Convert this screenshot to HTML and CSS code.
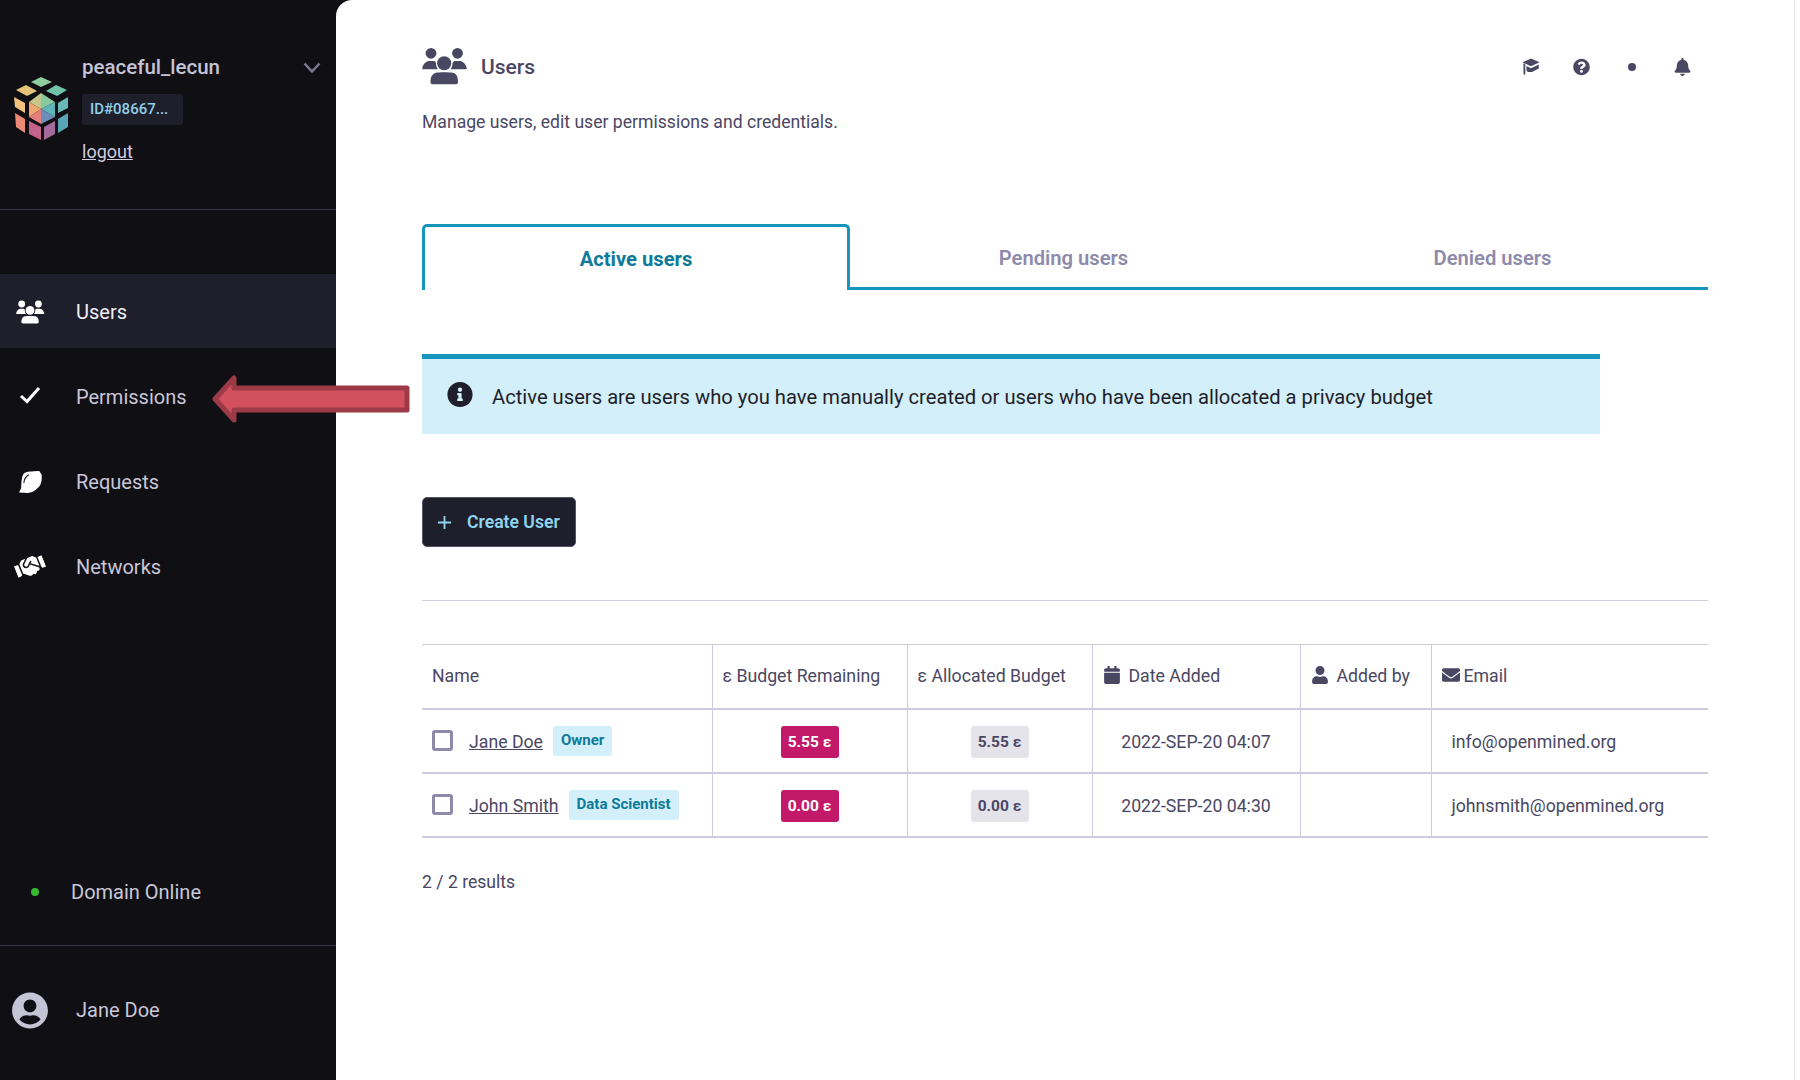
FILE: index.html
```html
<!DOCTYPE html>
<html lang="en">
<head>
    <meta charset="UTF-8">
    <title>Users</title>
    <link rel="stylesheet" href="styles.css">
</head>
<body>

<div class="app">
    <!-- Sidebar -->
    <aside class="sidebar">
        <div class="domain">
            <svg class="logo" viewBox="14 76 55 64">
                <polygon fill="#8fcf9f" points="41,77 52,82 41,87 31,82"/>
                <polygon fill="#e3c47a" points="16,90 26,85 37,91 27,96"/>
                <polygon fill="#72c4a8" points="46,91 56,85 67,90 57,96"/>
                <polygon fill="#f3c27c" points="14,97 25,103 25,113 15,107"/>
                <polygon fill="#ec8a76" points="15,113 25,119 25,133 16,127"/>
                <polygon fill="#c4638a" points="29,121 41,127 41,140 29,134"/>
                <polygon fill="#a56a9c" points="44,127 55,121 55,134 44,140"/>
                <polygon fill="#66b9b4" points="58,103 68,97 68,108 58,113"/>
                <polygon fill="#5aa5b5" points="58,119 68,113 68,127 58,133"/>
                <polygon fill="#86c99c" points="41,93 55,102 41,109"/>
                <polygon fill="#c7c58a" points="41,93 41,109 29,102"/>
                <polygon fill="#f0a672" points="29,102 41,109 29,117"/>
                <polygon fill="#e57f7c" points="29,117 41,109 41,124"/>
                <polygon fill="#6f8db8" points="41,109 55,117 41,124"/>
                <polygon fill="#5fb3ba" points="55,102 55,117 41,109"/>
            </svg>
            <div class="domain-info">
                <div class="domain-name">peaceful_lecun</div>
                <div class="domain-id">ID#08667...</div>
                <a class="logout" href="#">logout</a>
            </div>
            <svg class="chevron" viewBox="0 0 18 12"><polyline points="1.5,1.5 9,9.5 16.5,1.5"/></svg>
        </div>

        <nav class="nav">
            <a class="nav-item active" href="#">
                <span class="nav-icon">
                    <svg class="ico-users" viewBox="0 0 46 38">
                        <circle cx="9" cy="6.3" r="5.4"/>
                        <circle cx="35.500" cy="6.3" r="5.4"/>
                        <circle cx="22.200" cy="16.3" r="7"/>
                        <path d="M.2 22.300C.5 18 3 14.500 7 14h5c1.500 0 2 1.500 2 2.500 0 2.500 1 4.500 2 5.800z"/>
                        <path d="M44.800 22.300c-.3-4.300-2.800-7.800-6.800-8.300h-5c-1.500 0-2.500 1.500-2.500 2.500 0 2.500-1 4.500-2 5.800z"/>
                        <path d="M8.500 35c0-5 1.500-8 5.500-9.300 2-.7 14-.7 17 0 4 1.300 5 4.300 5 9.300 0 1.500-1 2.300-2.500 2.300H11c-1.500 0-2.500-.8-2.500-2.300z"/>
                    </svg>
                </span>
                Users
            </a>
            <a class="nav-item" href="#">
                <span class="nav-icon">
                    <svg class="ico-check" viewBox="0 0 22 18"><polyline points="2,10 8,15.5 20,2"/></svg>
                </span>
                Permissions
            </a>
            <a class="nav-item" href="#">
                <span class="nav-icon">
                    <svg class="ico-leaf" viewBox="0 0 21 20">
                        <path d="M8 .7C12 .2 16 0 18.500 0l2.200 3.300c.3 4.700-.2 8.700-2.700 11.200C15 18 11 20 8 20l-8-.5 2-4c0-4.500.5-9.500 1.500-12C4.500 2 6 1 8 .7z"/>
                        <path class="leaf-vein" d="M4.500 11C4.500 8 6 5 9 3.300"/>
                    </svg>
                </span>
                Requests
            </a>
            <a class="nav-item" href="#">
                <span class="nav-icon">
                    <svg class="ico-hands" viewBox="0 0 640 512"><path d="M434.7 64h-85.9c-8 0-15.7 3-21.6 8.4l-98.3 90c-.1.1-.2.3-.3.4-16.6 15.6-16.3 40.5-2.1 56 12.7 13.9 39.4 17.6 56.1 2.7.1-.1.3-.1.4-.2l79.9-73.2c6.5-5.9 16.7-5.5 22.6 1 6 6.5 5.5 16.6-1 22.6l-26.1 23.9L504 313.8c2.9 2.4 5.5 5 7.9 7.7V128l-54.6-54.6c-5.9-6-14.1-9.4-22.6-9.4zM544 128.2v223.9c0 17.7 14.3 32 32 32h64V128.2h-96zM0 384h64c17.7 0 32-14.3 32-32V128.2H0V384zm483.9-45.300L334.6 217.5l-30 27.5c-29.7 27.1-75.2 24.5-101.7-4.4-26.9-29.4-24.8-74.9 4.4-101.7L289.1 64h-83.8c-8.5 0-16.6 3.4-22.6 9.4L128 128v223.9h18.3l90.5 81.9c27.4 22.3 67.7 18.1 90-9.3l.2-.2 17.9 15.5c15.9 13 39.4 10.5 52.3-5.4l31.4-38.6 5.4 4.4c13.7 11.1 33.9 9.1 45-4.7l9.5-11.7c11.2-13.8 9.1-33.9-4.6-45.1z"/></svg>
                </span>
                Networks
            </a>
        </nav>

        <div class="status"><span class="status-dot"></span>Domain Online</div>

        <div class="account">
            <span class="nav-icon">
                <svg class="ico-avatar" viewBox="0 0 496 512"><path d="M248 8C111 8 0 119 0 256s111 248 248 248 248-111 248-248S385 8 248 8zm0 96c48.6 0 88 39.4 88 88s-39.4 88-88 88-88-39.4-88-88 39.4-88 88-88zm0 344c-58.7 0-111.3-26.6-146.5-68.2 18.8-35.4 55.6-59.8 98.5-59.8 2.4 0 4.8.4 7.1 1.1 13 4.2 26.6 6.9 40.9 6.9 14.3 0 28-2.7 40.9-6.9 2.3-.7 4.7-1.1 7.1-1.1 42.9 0 79.7 24.4 98.5 59.8C359.3 421.4 306.7 448 248 448z"/></svg>
            </span>
            Jane Doe
        </div>
    </aside>

    <!-- Main content -->
    <main class="main">
        <div class="content">
            <header class="page-head">
                <svg class="ico-title" viewBox="0 0 46 38">
                    <circle cx="9" cy="6.3" r="5.4"/>
                    <circle cx="35.500" cy="6.3" r="5.4"/>
                    <circle cx="22.200" cy="16.3" r="7"/>
                    <path d="M.2 22.300C.5 18 3 14.500 7 14h5c1.500 0 2 1.500 2 2.500 0 2.500 1 4.500 2 5.800z"/>
                    <path d="M44.800 22.300c-.3-4.300-2.800-7.800-6.800-8.300h-5c-1.500 0-2.500 1.500-2.500 2.500 0 2.500-1 4.500-2 5.800z"/>
                    <path d="M8.500 35c0-5 1.500-8 5.500-9.300 2-.7 14-.7 17 0 4 1.300 5 4.300 5 9.300 0 1.500-1 2.300-2.500 2.300H11c-1.500 0-2.500-.8-2.500-2.300z"/>
                </svg>
                <h1>Users</h1>
                <div class="head-tools">
                    <span class="tool">
                        <svg class="ico-cap" viewBox="0 0 18 17">
                            <polygon points="9,.5 17.500,4.300 9,8.300 .5,4.300"/>
                            <path d="M4.500 8 9 10.200 16.800 6.500V10.500L10 14H6L4.500 12.800z"/>
                            <rect x="1.500" y="5.500" width="1.800" height="11"/>
                        </svg>
                    </span>
                    <span class="tool">
                        <svg class="ico-tool" viewBox="0 0 512 512"><path d="M504 256c0 136.997-111.043 248-248 248S8 392.997 8 256C8 119.083 119.043 8 256 8s248 111.083 248 248zM262.655 90c-54.497 0-89.255 22.957-116.549 63.758-3.536 5.286-2.353 12.415 2.715 16.258l34.699 26.31c5.205 3.947 12.621 3.008 16.665-2.122 17.864-22.658 30.113-35.797 57.303-35.797 20.429 0 45.698 13.148 45.698 32.958 0 14.976-12.363 22.667-32.534 33.976C247.128 238.528 216 254.941 216 296v4c0 6.627 5.373 12 12 12h56c6.627 0 12-5.373 12-12v-1.333c0-28.462 83.186-29.647 83.186-106.667 0-58.002-60.165-102-116.531-102zM256 338c-25.365 0-46 20.635-46 46 0 25.364 20.635 46 46 46s46-20.636 46-46c0-25.365-20.635-46-46-46z"/></svg>
                    </span>
                    <span class="tool"><span class="tool-dot"></span></span>
                    <span class="tool">
                        <svg class="ico-tool" viewBox="0 0 448 512"><path d="M224 512c35.32 0 63.97-28.65 63.97-64H160.030c0 35.35 28.65 64 63.97 64zm215.39-149.71c-19.32-20.76-55.47-51.99-55.47-154.29 0-77.7-54.48-139.9-127.94-155.16V32c0-17.67-14.32-32-31.98-32s-31.98 14.33-31.98 32v20.84C118.56 68.1 64.08 130.3 64.08 208c0 102.3-36.15 133.53-55.47 154.29-6 6.45-8.66 14.16-8.61 21.71.11 16.4 12.98 32 32.1 32h383.8c19.12 0 32-15.6 32.1-32 .05-7.55-2.61-15.27-8.61-21.71z"/></svg>
                    </span>
                </div>
            </header>
            <p class="page-desc">Manage users, edit user permissions and credentials.</p>

            <div class="tabs">
                <div class="tab active">Active users</div>
                <div class="tab">Pending users</div>
                <div class="tab">Denied users</div>
            </div>

            <div class="alert">
                <svg class="ico-info" viewBox="0 0 512 512"><path d="M256 8C119.043 8 8 119.083 8 256c0 136.997 111.043 248 248 248s248-111.003 248-248C504 119.083 392.957 8 256 8zm0 110c23.196 0 42 18.804 42 42s-18.804 42-42 42-42-18.804-42-42 18.804-42 42-42zm56 254c0 6.627-5.373 12-12 12h-88c-6.627 0-12-5.373-12-12v-24c0-6.627 5.373-12 12-12h12v-64h-12c-6.627 0-12-5.373-12-12v-24c0-6.627 5.373-12 12-12h64c6.627 0 12 5.373 12 12v100h12c6.627 0 12 5.373 12 12v24z"/></svg>
                Active users are users who you have manually created or users who have been allocated a privacy budget
            </div>

            <button class="btn-create">
                <svg class="ico-plus" viewBox="0 0 16 16"><path d="M8 1v14M1 8h14"/></svg>
                Create User
            </button>

            <hr class="divider">

            <table class="users-table">
                <colgroup>
                    <col class="col-name">
                    <col class="col-remain">
                    <col class="col-alloc">
                    <col class="col-date">
                    <col class="col-by">
                    <col class="col-email">
                </colgroup>
                <thead>
                    <tr>
                        <th>Name</th>
                        <th>ε Budget Remaining</th>
                        <th>ε Allocated Budget</th>
                        <th>
                            <svg class="th-icon th-gap" viewBox="0 0 448 512"><path d="M12 192h424c6.6 0 12 5.400 12 12v260c0 26.500-21.500 48-48 48H48c-26.500 0-48-21.500-48-48V204c0-6.600 5.400-12 12-12zm436-44v-36c0-26.500-21.500-48-48-48h-48V12c0-6.600-5.400-12-12-12h-40c-6.600 0-12 5.400-12 12v52H160V12c0-6.600-5.400-12-12-12h-40c-6.600 0-12 5.400-12 12v52H48C21.500 64 0 85.500 0 112v36c0 6.600 5.400 12 12 12h424c6.600 0 12-5.400 12-12z"/></svg>Date Added
                        </th>
                        <th>
                            <svg class="th-icon th-gap" viewBox="0 0 448 512"><path d="M224 256c70.700 0 128-57.300 128-128S294.700 0 224 0 96 57.300 96 128s57.300 128 128 128zm89.600 32h-16.700c-22.200 10.200-46.900 16-72.900 16s-50.600-5.800-72.900-16h-16.700C60.200 288 0 348.200 0 422.400V464c0 26.500 21.500 48 48 48h352c26.500 0 48-21.500 48-48v-41.600c0-74.200-60.200-134.400-134.400-134.400z"/></svg>Added by
                        </th>
                        <th>
                            <svg class="th-icon" viewBox="0 0 512 512"><path d="M502.300 190.800c3.900-3.100 9.700-.2 9.700 4.700V400c0 26.500-21.500 48-48 48H48c-26.500 0-48-21.500-48-48V195.600c0-5 5.700-7.800 9.700-4.700 22.400 17.400 52.100 39.500 154.100 113.600 21.100 15.400 56.700 47.800 92.200 47.600 35.700.3 72-32.800 92.300-47.600 102-74.100 131.600-96.300 154-113.700zM256 320c23.200.4 56.600-29.200 73.400-41.400 132.700-96.300 142.800-104.700 173.400-128.700 5.800-4.500 9.200-11.500 9.200-18.900v-19c0-26.500-21.500-48-48-48H48C21.500 64 0 85.500 0 112v19c0 7.400 3.400 14.300 9.200 18.900 30.600 23.900 40.700 32.400 173.400 128.700 16.800 12.200 50.200 41.800 73.400 41.400z"/></svg>Email
                        </th>
                    </tr>
                </thead>
                <tbody>
                    <tr>
                        <td>
                            <div class="name-cell">
                                <span class="checkbox"></span>
                                <a class="user-link" href="#">Jane Doe</a>
                                <span class="role-tag">Owner</span>
                            </div>
                        </td>
                        <td class="center"><span class="budget remain">5.55 ε</span></td>
                        <td class="center"><span class="budget alloc">5.55 ε</span></td>
                        <td class="center">2022-SEP-20 04:07</td>
                        <td></td>
                        <td class="email">info@openmined.org</td>
                    </tr>
                    <tr>
                        <td>
                            <div class="name-cell">
                                <span class="checkbox"></span>
                                <a class="user-link" href="#">John Smith</a>
                                <span class="role-tag">Data Scientist</span>
                            </div>
                        </td>
                        <td class="center"><span class="budget remain">0.00 ε</span></td>
                        <td class="center"><span class="budget alloc">0.00 ε</span></td>
                        <td class="center">2022-SEP-20 04:30</td>
                        <td></td>
                        <td class="email">johnsmith@openmined.org</td>
                    </tr>
                </tbody>
            </table>

            <p class="results">2 / 2 results</p>
        </div>
    </main>

    <!-- Callout arrow over the sidebar edge -->
    <svg class="callout" viewBox="0 0 204 54">
        <polygon points="5,27 24,6 24,16 197,16 197,38 24,38 24,48"/>
    </svg>
</div>

</body>
</html>
```

FILE: styles.css
```css
/* Reset and basic styling */
* {
    margin: 0;
    padding: 0;
    box-sizing: border-box;
}
html, body {
    height: 100%;
    overflow: hidden;
}
body {
    font-family: Roboto, "Liberation Sans", sans-serif;
    color: #4a4763;
    background-color: #fff;
}
a {
    color: inherit;
}
svg {
    display: block;
    fill: currentColor;
}
.app {
    position: relative;
    display: flex;
    height: 1080px;
    background-color: #0f0f14;
}

/* Sidebar */
.sidebar {
    width: 336px;
    flex-shrink: 0;
    display: flex;
    flex-direction: column;
    color: #c9c7d9;
}
.domain {
    height: 210px;
    display: flex;
    align-items: center;
    padding: 0 15px 0 14px;
    border-bottom: 1px solid #35334a;
}
.logo {
    width: 55px;
    height: 64px;
    flex-shrink: 0;
    margin-right: 13px;
    margin-top: 7px;
}
.domain-info {
    flex: 1;
    display: flex;
    flex-direction: column;
    align-items: flex-start;
    padding-top: 9.5px;
}
.domain-name {
    font-size: 20.5px;
    font-weight: 500;
    line-height: 24px;
    color: #c5c3d6;
}
.domain-id {
    width: 101px;
    height: 31px;
    margin-top: 15.5px;
    padding-left: 8px;
    border-radius: 3px;
    background-color: #1f1e2b;
    color: #8fd0e8;
    font-size: 15px;
    font-weight: 500;
    line-height: 31px;
}
.logout {
    margin-top: 15px;
    font-size: 18px;
    line-height: 24px;
    color: #d0cee0;
}
.chevron {
    width: 18px;
    height: 12px;
    margin-bottom: 74px;
    fill: none;
    stroke: #7c7996;
    stroke-width: 2.5;
}

/* Nav */
.nav {
    flex: 1;
    padding-top: 64px;
    display: flex;
    flex-direction: column;
    gap: 11px;
}
.nav-item {
    height: 74px;
    display: flex;
    align-items: center;
    padding-top: 1px;
    font-size: 20px;
    text-decoration: none;
}
.nav-item.active {
    background-color: #1f1e2b;
    color: #f1f0f7;
}
.nav-icon {
    width: 76px;
    padding-right: 16px;
    display: flex;
    justify-content: center;
    flex-shrink: 0;
    color: #fff;
}
.ico-users {
    width: 29px;
    height: 24px;
}
.ico-check {
    width: 22px;
    height: 18px;
    margin-top: -3px;
    fill: none;
    stroke: #fff;
    stroke-width: 3;
}
.ico-leaf {
    width: 23px;
    height: 22px;
}
.leaf-vein {
    fill: none;
    stroke: #0f0f14;
    stroke-width: 1;
}
.ico-hands {
    width: 30px;
    height: 25px;
    transform: rotate(-22deg);
}
.ico-avatar {
    width: 36px;
    height: 37px;
    color: #c5c3d6;
}

/* Status and account */
.status {
    height: 65.5px;
    display: flex;
    align-items: flex-start;
    padding-left: 71px;
    position: relative;
    font-size: 20px;
    line-height: 24px;
}
.status-dot {
    position: absolute;
    left: 31px;
    top: 8px;
    width: 8px;
    height: 8px;
    border-radius: 50%;
    background-color: #38b833;
}
.account {
    height: 135px;
    display: flex;
    align-items: center;
    padding-bottom: 6px;
    border-top: 1px solid #35334a;
    font-size: 20px;
}

/* Main content */
.main {
    flex: 1;
    padding-right: 5px;
    border-radius: 16px 0 0 0;
    background-color: #fff;
}
.content {
    height: 100%;
    padding: 47px 86px 0 86px;
    border-right: 1px solid #e5e5ea;
}
.page-head {
    height: 39px;
    display: flex;
    align-items: center;
}
.ico-title {
    width: 46px;
    height: 38px;
    margin: -2px 13px 0 0;
}
.page-head h1 {
    font-size: 21px;
    font-weight: 500;
    flex: 1;
}
.head-tools {
    display: flex;
}
.tool {
    width: 50.5px;
    height: 20px;
    display: flex;
    align-items: center;
    justify-content: center;
}
.ico-cap {
    width: 18px;
    height: 17px;
}
.ico-tool {
    width: 17px;
    height: 18px;
}
.tool-dot {
    width: 8px;
    height: 8px;
    border-radius: 50%;
    background-color: #4a4763;
}
.page-desc {
    margin-top: 24px;
    font-size: 17.6px;
    line-height: 24px;
}

/* Tabs */
.tabs {
    margin-top: 90px;
    height: 66px;
    display: grid;
    grid-template-columns: 428px 427px 1fr;
}
.tab {
    display: flex;
    align-items: center;
    justify-content: center;
    padding-top: 5px;
    font-size: 20.2px;
    font-weight: 600;
    color: #8e8aaa;
    border-bottom: 3px solid #1795bd;
}
.tab.active {
    color: #0d7a99;
    font-weight: 700;
    border: 3px solid #1795bd;
    border-bottom: none;
    border-radius: 5px 5px 0 0;
    padding-top: 0;
}

/* Info alert */
.alert {
    width: 1178px;
    height: 80px;
    margin-top: 64px;
    display: flex;
    align-items: center;
    padding-left: 25px;
    border-top: 5px solid #1795bd;
    background-color: #d3eff9;
    color: #1f1e2b;
    font-size: 20.2px;
}
.ico-info {
    width: 26px;
    height: 27px;
    margin-right: 19px;
    margin-top: -5px;
}

/* Create button */
.btn-create {
    margin-top: 63px;
    width: 154px;
    height: 50px;
    display: flex;
    align-items: center;
    padding-left: 14px;
    border: 1px solid #55536a;
    border-radius: 5px;
    background-color: #1f1e2b;
    color: #8fd4ee;
    font-family: inherit;
    font-size: 17.6px;
    font-weight: 600;
}
.ico-plus {
    width: 15px;
    height: 15px;
    margin-right: 15px;
    fill: none;
    stroke: #8fd4ee;
    stroke-width: 2;
}
.divider {
    margin-top: 53px;
    border: none;
    border-top: 1px solid #d0cfdc;
}

/* Table */
.users-table {
    margin-top: 43px;
    width: 1286px;
    border-collapse: collapse;
    table-layout: fixed;
    font-size: 17.7px;
}
.col-name { width: 290px; }
.col-remain { width: 195px; }
.col-alloc { width: 185px; }
.col-date { width: 208px; }
.col-by { width: 131px; }
.users-table th,
.users-table td {
    height: 64px;
    border: 2px solid #cdcbdd;
    border-left-width: 1px;
    border-right-width: 1px;
}
.users-table td {
    padding-top: 2px;
}
.users-table th:first-child,
.users-table td:first-child {
    border-left: none;
}
.users-table th:last-child,
.users-table td:last-child {
    border-right: none;
}
.users-table th {
    padding-left: 10px;
    text-align: left;
    font-weight: 400;
    border-top-width: 1px;
}
.th-icon {
    display: inline-block;
    vertical-align: -2px;
    width: 18px;
    height: 18px;
    margin-right: 4px;
}
.th-gap {
    margin-right: 8px;
}
.center {
    text-align: center;
}
.email {
    padding-left: 20px;
}
.name-cell {
    display: flex;
    align-items: center;
    padding-left: 10px;
}
.checkbox {
    width: 21px;
    height: 21px;
    margin-top: -3px;
    margin-right: 16px;
    border: 3px solid #8e8aaa;
    border-radius: 3px;
}
.user-link {
    margin-right: 10px;
}
.role-tag {
    height: 30px;
    margin-top: -2px;
    padding: 0 8px;
    border-radius: 3px;
    background-color: #d3eff9;
    color: #0d7a99;
    font-size: 15px;
    font-weight: 700;
    line-height: 28px;
}
.budget {
    display: inline-block;
    width: 58px;
    height: 32px;
    border-radius: 3px;
    font-size: 15.5px;
    font-weight: 700;
    line-height: 32px;
    vertical-align: middle;
}
.budget.remain {
    background-color: #c2196b;
    color: #fff;
}
.budget.alloc {
    background-color: #e4e3ea;
}
.results {
    margin-top: 32.5px;
    font-size: 17.6px;
    line-height: 24px;
}

/* Callout arrow */
.callout {
    position: absolute;
    left: 210px;
    top: 372px;
    width: 204px;
    height: 54px;
    fill: #d2505f;
    stroke: #9c3a47;
    stroke-width: 5;
    stroke-linejoin: round;
}
```
